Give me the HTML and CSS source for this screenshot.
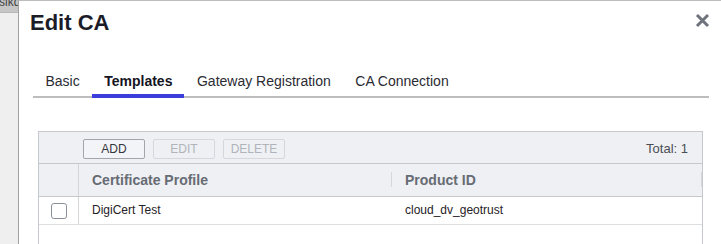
FILE: index.html
```html
<!DOCTYPE html>
<html>
<head>
<meta charset="utf-8">
<link rel="stylesheet" href="styles.css">
</head>
<body>
<div class="page">
  <div class="side">
    <div class="side-top"><span class="side-label">sikq</span></div>
  </div>
  <div class="dialog">
    <h1 class="title">Edit CA</h1>
    <button class="close" aria-label="Close">
      <svg width="15" height="15" viewBox="0 0 15 15"><path d="M2 2 L13 13 M13 2 L2 13" stroke="#6e737c" stroke-width="3" fill="none"/></svg>
    </button>
    <div class="tabs">
      <div class="tab">Basic</div>
      <div class="tab active">Templates</div>
      <div class="tab">Gateway Registration</div>
      <div class="tab">CA Connection</div>
    </div>
    <div class="grid">
      <div class="toolbar">
        <button class="btn">ADD</button>
        <button class="btn disabled">EDIT</button>
        <button class="btn disabled">DELETE</button>
        <span class="total">Total: 1</span>
      </div>
      <div class="row head">
        <div class="cell check"></div>
        <div class="cell col sep">Certificate Profile</div>
        <div class="cell col sep">Product ID</div>
      </div>
      <div class="row data">
        <div class="cell check"><span class="box"></span></div>
        <div class="cell col">DigiCert Test</div>
        <div class="cell col">cloud_dv_geotrust</div>
      </div>
    </div>
  </div>
</div>
</body>
</html>
```

FILE: styles.css
```css
html, body {
  margin: 0;
  padding: 0;
  height: 100%;
  overflow: hidden;
  font-family: "Liberation Sans", Arial, sans-serif;
  background: #ffffff;
}

.page {
  display: flex;
  height: 244px;
}

.side {
  width: 18px;
  background: #efefef;
  flex: none;
}

.side-top {
  height: 13px;
  background: #c6c6c6;
  overflow: hidden;
  border-bottom: 1px solid #b8b8b8;
  box-sizing: border-box;
}

.side-label {
  display: block;
  font-size: 12px;
  line-height: 4px;
  color: #444;
  margin-left: -1px;
}

.dialog {
  position: relative;
  flex: 1;
  display: flex;
  flex-direction: column;
  border-left: 1px solid #a2a2a2;
  border-top: 1px solid #bdbdbd;
  background: #fff;
  padding: 10px 9px 0 11px;
  min-width: 0;
}

.title {
  margin: 0;
  font-size: 22px;
  line-height: 24px;
  font-weight: bold;
  color: #1c1c28;
}

.close {
  position: absolute;
  top: 12px;
  right: 11px;
  width: 15px;
  height: 15px;
  padding: 0;
  border: 0;
  background: none;
  display: block;
}

.close svg {
  display: block;
}

.tabs {
  display: flex;
  margin: 38px 3px 0 3px;
  border-bottom: 2px solid #bdbdbd;
}

.tab {
  font-size: 14px;
  line-height: 16px;
  color: #2b2b33;
  padding: 0 12px 5px 12.5px;
  border-bottom: 4px solid transparent;
  margin-bottom: -2px;
}

.tab.active {
  font-weight: bold;
  color: #15151f;
  border-bottom-color: #3a3edb;
}

.grid {
  flex: 1;
  margin: 33px 9px 0 8px;
  border: 1px solid #c5c8cd;
  border-bottom: 0;
  display: flex;
  flex-direction: column;
}

.toolbar {
  display: flex;
  align-items: center;
  gap: 8px;
  height: 32px;
  box-sizing: border-box;
  padding: 7px 14px 5px 44px;
  background: #eef0f4;
  border-bottom: 1px solid #c5c8cd;
}

.btn {
  width: 62px;
  height: 20px;
  box-sizing: border-box;
  border: 1px solid #a2a6ac;
  border-radius: 2px;
  background: #f3f4f7;
  font-family: "Liberation Sans", Arial, sans-serif;
  font-size: 12px;
  line-height: 18px;
  color: #33363c;
  padding: 0;
}

.btn.disabled {
  border-color: #d5d7dc;
  color: #b0b3b9;
  background: #eef0f4;
}

.total {
  margin-left: auto;
  font-size: 13px;
  color: #4a4d53;
}

.row {
  display: grid;
  grid-template-columns: 40px 313px 1fr;
}

.head {
  height: 32px;
  background: #eef0f4;
  border-bottom: 1px solid #c5c8cd;
}

.head .cell {
  font-size: 14px;
  line-height: 32px;
  font-weight: bold;
  color: #676b73;
}

.cell.check {
  border-right: 1px solid #d3d5d9;
  display: flex;
  align-items: center;
  justify-content: center;
}

.cell.col {
  position: relative;
  padding-left: 13px;
}

.cell.sep::after {
  content: "";
  position: absolute;
  right: 0;
  top: 8px;
  width: 1px;
  height: 15px;
  background: #d5d7db;
}

.data {
  height: 27px;
  border-bottom: 1px solid #dcdee1;
}

.data .cell {
  font-size: 12px;
  line-height: 27px;
  color: #1f2126;
}

.box {
  width: 16px;
  height: 16px;
  box-sizing: border-box;
  border: 1px solid #8b919a;
  border-radius: 3px;
  background: #fff;
  display: block;
}
```
